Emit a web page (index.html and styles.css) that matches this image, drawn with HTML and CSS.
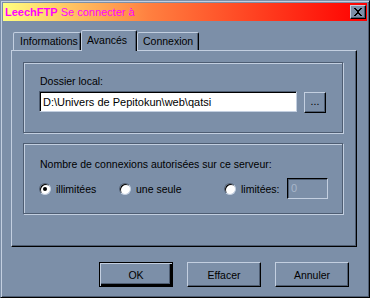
FILE: index.html
```html
<!DOCTYPE html>
<html lang="fr">
<head>
<meta charset="utf-8">
<title>LeechFTP</title>
<link rel="stylesheet" href="styles.css">
</head>
<body>
<div class="window">
  <div class="titlebar">
    <span class="title"><b>LeechFTP</b> Se connecter à</span>
    <span class="close"><svg width="10" height="8" viewBox="0 0 10 8" shape-rendering="crispEdges"><path d="M1 0h2v1h1v1h2v-1h1v-1h2v1h-1v1h-1v1h-1v2h1v1h1v1h1v1h-2v-1h-1v-1h-2v1h-1v1h-2v-1h1v-1h1v-1h1v-2h-1v-1h-1v-1h-1z" fill="#000"/></svg></span>
  </div>
  <div class="body">
    <div class="tabs">
      <div class="tab t-info">Informations</div>
      <div class="tab active t-adv">Avancés</div>
      <div class="tab t-con">Connexion</div>
    </div>
    <div class="panel">
      <div class="group g1">
        <div class="label">Dossier local:</div>
        <div class="row">
          <div class="input">D:\Univers de Pepitokun\web\qatsi</div>
          <div class="btn browse">...</div>
        </div>
      </div>
      <div class="group g2">
        <div class="label">Nombre de connexions autorisées sur ce serveur:</div>
        <div class="radios">
          <div class="radio r1"><span class="circle checked"></span>illimitées</div>
          <div class="radio r2"><span class="circle"></span>une seule</div>
          <div class="radio r3"><span class="circle"></span>limitées:</div>
          <div class="input disabled">0</div>
        </div>
      </div>
    </div>
    <div class="buttons">
      <div class="btn default">OK</div>
      <div class="btn">Effacer</div>
      <div class="btn">Annuler</div>
    </div>
  </div>
</div>
</body>
</html>
```
FILE: styles.css
```css
html, body {
  margin: 0;
  padding: 0;
  background: #7c8fa8;
}
.window {
  width: 370px;
  height: 298px;
  box-sizing: border-box;
  background: #7c8fa8;
  border: 1px solid;
  border-color: #7c8fa8 #000 #000 #7c8fa8;
  box-shadow: inset 1px 1px #c3cfe0, inset -1px -1px #4e5d72;
  padding: 2px;
  font-family: "Liberation Sans", Arial, sans-serif;
  font-size: 10.5px;
  color: #000;
}
.titlebar {
  height: 18px;
  display: flex;
  align-items: center;
  justify-content: space-between;
  padding: 0 1px 0 2px;
  background: linear-gradient(to right, #ffff80, #ff8040 40%, #ff0000 100%);
}
.title {
  color: #ff00ff;
  font-size: 11px;
  white-space: nowrap;
}
.title b { font-weight: bold; }
.close {
  width: 16px;
  height: 14px;
  box-sizing: border-box;
  background: #7c8fa8;
  border: 1px solid;
  border-color: #c3cfe0 #000 #000 #c3cfe0;
  box-shadow: inset -1px -1px #4e5d72;
  display: flex;
  align-items: center;
  justify-content: center;
}
.body {
  padding: 9px 0 0 8px;
}
.tabs {
  display: flex;
  align-items: flex-end;
  height: 20px;
  padding-left: 2px;
}
.tab {
  box-sizing: border-box;
  height: 18px;
  border: 1px solid;
  border-bottom: none;
  border-color: #c3cfe0 #000 transparent #c3cfe0;
  box-shadow: inset -1px 0 #4e5d72;
  border-radius: 2px 2px 0 0;
  padding: 2px 0 0 6px;
  white-space: nowrap;
  background: #7c8fa8;
}
.t-info { width: 68px; }
.t-adv { width: 56px; }
.t-con { width: 62px; padding-left: 5px; }
.tab.active {
  height: 21px;
  margin-bottom: -1px;
  position: relative;
  z-index: 1;
  padding: 3px 0 0 5px;
}
.panel {
  width: 346px;
  height: 197px;
  box-sizing: border-box;
  border: 1px solid;
  border-color: #c3cfe0 #000 #000 #c3cfe0;
  box-shadow: inset -1px -1px #4e5d72;
  padding: 11px 0 0 11px;
}
.group {
  width: 320px;
  height: 71px;
  box-sizing: border-box;
  border: 1px solid #4e5d72;
  box-shadow: inset 1px 1px #c3cfe0, 1px 1px #c3cfe0;
}
.g1 { padding: 12px 0 0 15px; }
.g2 { margin-top: 10px; padding: 14px 0 0 15px; }
.label {
  height: 13px;
  line-height: 13px;
  padding-left: 1px;
  white-space: nowrap;
}
.row {
  display: flex;
  align-items: flex-start;
  margin-top: 3px;
}
.input {
  box-sizing: border-box;
  width: 258px;
  height: 21px;
  background: #fff;
  border: 1px solid;
  border-color: #4e5d72 #c3cfe0 #c3cfe0 #4e5d72;
  box-shadow: inset 1px 1px #000;
  padding: 4px 0 0 3px;
  line-height: 13px;
  font-size: 11px;
  white-space: nowrap;
  overflow: hidden;
}
.btn {
  box-sizing: border-box;
  border: 1px solid;
  border-color: #c3cfe0 #000 #000 #c3cfe0;
  box-shadow: inset -1px -1px #4e5d72;
  background: #7c8fa8;
  display: flex;
  align-items: center;
  justify-content: center;
  white-space: nowrap;
}
.browse {
  width: 22px;
  height: 21px;
  margin: 1px 0 0 7px;
  padding-bottom: 3px;
}
.radios {
  display: flex;
  align-items: center;
  margin-top: 7px;
  height: 21px;
}
.radio {
  display: flex;
  align-items: center;
  white-space: nowrap;
}
.r1 { width: 80px; }
.r2 { width: 105px; }
.r3 { width: 63px; }
.circle {
  width: 12px;
  height: 12px;
  box-sizing: border-box;
  border-radius: 50%;
  border: 1px solid;
  border-color: #4e5d72 #c3cfe0 #c3cfe0 #4e5d72;
  box-shadow: inset 1px 1px #000;
  background: #fff;
  margin-right: 5px;
  display: flex;
  align-items: center;
  justify-content: center;
}
.circle.checked::after {
  content: "";
  width: 4px;
  height: 4px;
  border-radius: 50%;
  background: #000;
}
.input.disabled {
  width: 41px;
  background: #7c8fa8;
  color: #a8b6ca;
  border-color: #000 #c3cfe0 #c3cfe0 #000;
  box-shadow: inset 1px 1px #4e5d72;
  padding: 3px 0 0 3px;
}
.buttons {
  display: flex;
  justify-content: flex-end;
  gap: 14px;
  margin-top: 15px;
  padding-right: 18px;
}
.buttons .btn {
  width: 74px;
  height: 25px;
}
.btn.default {
  border-color: #000;
  box-shadow: inset 1px 1px #c3cfe0, inset -2px -2px #000, inset -3px -3px #4e5d72;
  border-width: 1px;
}
```
